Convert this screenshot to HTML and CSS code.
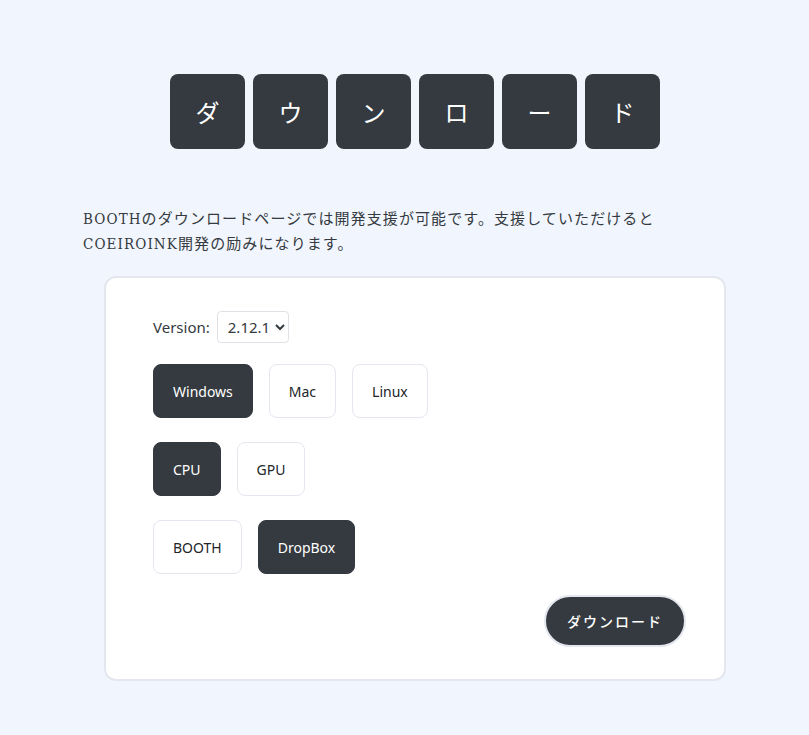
FILE: index.html
```html
<!DOCTYPE html>
<html lang="ja">
<head>
<meta charset="utf-8">
<title>ダウンロード</title>
<link rel="stylesheet" href="styles.css">
</head>
<body>
<main class="container">
  <h1 class="title">
    <span class="tile">ダ</span>
    <span class="tile">ウ</span>
    <span class="tile">ン</span>
    <span class="tile">ロ</span>
    <span class="tile">ー</span>
    <span class="tile">ド</span>
  </h1>
  <p class="lead">BOOTHのダウンロードページでは開発支援が可能です。支援していただけると<br>COEIROINK開発の励みになります。</p>
  <section class="card">
    <div class="version-row">
      <label class="version-label" for="ver">Version:</label>
      <select id="ver" class="version-select">
        <option>2.12.1</option>
      </select>
    </div>
    <div class="btn-row">
      <button class="opt active">Windows</button>
      <button class="opt">Mac</button>
      <button class="opt">Linux</button>
    </div>
    <div class="btn-row">
      <button class="opt active">CPU</button>
      <button class="opt">GPU</button>
    </div>
    <div class="btn-row">
      <button class="opt">BOOTH</button>
      <button class="opt active">DropBox</button>
    </div>
    <div class="action-row">
      <button class="download">ダウンロード</button>
    </div>
  </section>
</main>
</body>
</html>
```
FILE: styles.css
```css
html, body {
  margin: 0;
  padding: 0;
  background: #f1f5fd;
}
body {
  font-family: "Noto Sans", "Noto Sans CJK JP", sans-serif;
  color: #343a40;
}
.container {
  width: 664px;
  margin-left: 83px;
  padding-top: 74px;
}
.title {
  margin: 0;
  display: flex;
  justify-content: center;
  gap: 8px;
}
.tile {
  width: 75px;
  height: 75px;
  border-radius: 8px;
  background: #343a40;
  color: #fff;
  display: flex;
  align-items: center;
  justify-content: center;
  font-family: "Noto Sans CJK JP", sans-serif;
  font-size: 24px;
  font-weight: 400;
}
.lead {
  margin: 58px 0 0;
  font-family: "DejaVu Serif Condensed", "DejaVu Serif", "Noto Sans CJK JP", serif;
  font-stretch: condensed;
  font-size: 15px;
  letter-spacing: 1.1px;
  line-height: 25px;
  color: #343a40;
}
.card {
  width: 622px;
  box-sizing: border-box;
  margin: 19px auto 0;
  background: #fff;
  border: 2px solid #e4e7ee;
  border-radius: 12px;
  padding: 32px 38px 32px 47px;
}
.version-row {
  display: flex;
  align-items: center;
  gap: 7px;
  height: 34px;
}
.version-label {
  font-size: 15px;
  color: #343a40;
}
.version-select {
  height: 32px;
  font-family: "Noto Sans", sans-serif;
  font-size: 15px;
  color: #343a40;
  background: #fff;
  border: 1px solid #dee2e6;
  border-radius: 4px;
  padding: 0 1px 0 6px;
}
.btn-row {
  display: flex;
  gap: 16px;
  margin-top: 20px;
}
.btn-row + .btn-row {
  margin-top: 24px;
}
.opt {
  height: 54px;
  padding: 0 19px;
  font-family: "Noto Sans", sans-serif;
  font-size: 14px;
  color: #212529;
  background: #fff;
  border: 1px solid #e4e7ee;
  border-radius: 8px;
}
.opt.active {
  background: #343a40;
  border-color: #343a40;
  color: #fff;
}
.action-row {
  display: flex;
  justify-content: flex-end;
  margin-top: 21px;
}
.download {
  height: 52px;
  padding: 0 21px;
  border-radius: 26px;
  background: #343a40;
  border: 2px solid #e4e7ee;
  color: #fff;
  font-family: "Noto Sans CJK JP", sans-serif;
  font-size: 14px;
  font-weight: 500;
  letter-spacing: 2px;
}
```
